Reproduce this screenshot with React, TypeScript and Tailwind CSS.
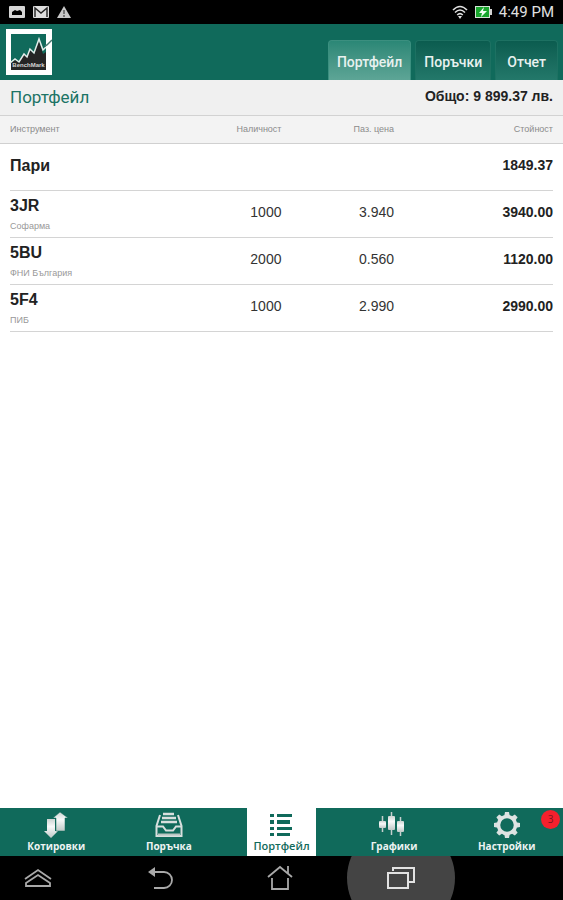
import type { ReactNode } from 'react'
import clsx from 'clsx'

const TOP_TABS = ['Портфейл', 'Поръчки', 'Отчет']

const POSITIONS = [
  { code: '3JR', name: 'Софарма', quantity: '1000', price: '3.940', value: '3940.00' },
  { code: '5BU', name: 'ФНИ България', quantity: '2000', price: '0.560', value: '1120.00' },
  { code: '5F4', name: 'ПИБ', quantity: '1000', price: '2.990', value: '2990.00' },
]

function SteelGradient({ id }: { id: string }) {
  return (
    <linearGradient id={id} x1="0" y1="0" x2="0" y2="1">
      <stop offset="0" stopColor="#cdd5d3" />
      <stop offset="0.4" stopColor="#f7f9f9" />
      <stop offset="1" stopColor="#bfc9c7" />
    </linearGradient>
  )
}

function Logo() {
  return (
    <svg width="46" height="46" viewBox="0 0 46 46" role="img" aria-label="BenchMark">
      <rect width="46" height="46" fill="#fff" />
      <rect x="5" y="5" width="35" height="36" fill="#106a5b" />
      <path d="M5 34l4-3 4 2 5-8 3 3 3-7 4 4 5-13 4 13 3-2v18H5z" fill="#252525" />
      <path d="M4 34l5-4 4 3 5-8 3 3 3-8 4 4 5-14 4 11 3-3" fill="none" stroke="#e4ecea" strokeWidth="1.5" />
      <path d="M39 17l2-1 5-5" fill="none" stroke="#48786f" strokeWidth="1.5" />
      <text x="22.5" y="38" textAnchor="middle" fontSize="6" fill="#d5d5d5" className="font-['Liberation_Sans',sans-serif] font-bold">
        BenchMark
      </text>
    </svg>
  )
}

function PictureIcon() {
  return (
    <svg width="16" height="12" viewBox="0 0 16 12">
      <rect width="16" height="12" rx="1" fill="#d6d6d6" />
      <path d="M3 9V6l3-2 2 1 3-1 2 2v3z" fill="#000" />
    </svg>
  )
}

function MailIcon() {
  return (
    <svg width="16" height="12" viewBox="0 0 16 12">
      <rect width="16" height="12" rx="1" fill="#dedede" />
      <path d="M2 11V2l6 5 6-5v9" fill="none" stroke="#222" strokeWidth="1.4" />
    </svg>
  )
}

function WarningIcon() {
  return (
    <svg width="14" height="12" viewBox="0 0 14 12">
      <path d="M7 0l7 12H0z" fill="#c8c8c8" />
      <path d="M7 4v4M7 9v2" stroke="#555" strokeWidth="1.4" />
    </svg>
  )
}

function WifiIcon() {
  return (
    <svg width="16" height="14" viewBox="0 0 16 14" fill="none" stroke="#e0e0e0" strokeWidth="1.6">
      <path d="M1 5Q8-2 15 5" />
      <path d="M3 7.5Q8 2.5 13 7.5" />
      <path d="M5.2 10Q8 7.2 10.8 10" />
      <path d="M6 11h4l-2 3z" fill="#e0e0e0" stroke="none" />
    </svg>
  )
}

function BatteryIcon() {
  return (
    <svg width="17" height="12" viewBox="0 0 17 12">
      <rect x="15" y="3" width="2" height="6" fill="#d4d4d4" />
      <rect x="0.5" y="0.5" width="14" height="11" fill="#18a52c" stroke="#d4e4d5" />
      <path d="M9 1L4 7h3l-1 4 6-6H8z" fill="#effff0" />
    </svg>
  )
}

function QuotesIcon() {
  return (
    <svg width="24" height="28" viewBox="0 0 24 28">
      <defs><SteelGradient id="quotes" /></defs>
      <path d="M3 8h8v12h3l-7 7-7-7h3z" fill="url(#quotes)" />
      <path d="M16 1l8 6h-3v13h-9V7H9z" fill="url(#quotes)" stroke="#106a5b" strokeWidth="0.5" />
    </svg>
  )
}

function OrderIcon() {
  return (
    <svg width="28" height="26" viewBox="0 0 28 26" fill="none" stroke="#d8dfde" strokeWidth="2">
      <path d="M8 2h11M7 6h14M6 10h16" strokeWidth="2.5" />
      <path d="M5 3L1.5 14v10h25V14L23 3" />
      <path d="M2 14.5h6l3 4h7l3-4h6" />
      <path d="M3 22.5h22" stroke="#b9c6c3" />
    </svg>
  )
}

function ListIcon() {
  return (
    <svg width="22" height="24" viewBox="0 0 22 24" fill="#106a5b">
      <path d="M0 1h4v3H0zM7 1h15v3H7zM0 7h4v4H0zM7 7h13v4H7zM0 14h4v3H0zM7 14h15v3H7zM0 20h4v3H0zM7 20h13v3H7z" />
    </svg>
  )
}

function CandlesIcon() {
  return (
    <svg width="31" height="28" viewBox="0 0 31 28">
      <defs><SteelGradient id="candles" /></defs>
      <path d="M3.5 5v16M12.5 1v23M21.5 6v19" stroke="#c5cfcd" strokeWidth="1.5" />
      <rect x="0" y="10" width="7" height="7" rx="1" fill="url(#candles)" />
      <rect x="9" y="5" width="7" height="14" rx="1" fill="url(#candles)" />
      <rect x="18" y="10" width="7" height="11" rx="1" fill="url(#candles)" />
    </svg>
  )
}

function GearIcon() {
  return (
    <svg width="26" height="26" viewBox="0 0 26 26">
      <g fill="#dbe1e0">
        {[0, 45, 90, 135, 180, 225, 270, 315].map((angle) => (
          <path key={angle} d="M10 5l1-5h4l1 5z" transform={`rotate(${angle} 13 13)`} />
        ))}
      </g>
      <circle cx="13" cy="13" r="8.5" fill="none" stroke="#dfe4e3" strokeWidth="3.5" />
    </svg>
  )
}

function DrawerIcon() {
  return (
    <svg width="28" height="20" viewBox="0 0 28 20" fill="none" stroke="#a9a9a9" strokeWidth="1.8">
      <path d="M1 11L14 2l13 9" />
      <path d="M2 15l12-8 12 8v3H2z" />
    </svg>
  )
}

function BackIcon() {
  return (
    <svg width="26" height="24" viewBox="0 0 26 24" fill="none" stroke="#a9a9a9" strokeWidth="1.8">
      <path d="M6 6h10a8 8 0 0 1 0 16H6" />
      <path d="M0 6l7-5v10z" fill="#a9a9a9" stroke="none" />
    </svg>
  )
}

function HomeIcon() {
  return (
    <svg width="26" height="26" viewBox="0 0 26 26" fill="none" stroke="#a9a9a9" strokeWidth="1.8">
      <path d="M1 12L13 2l12 10M21 8V1" />
      <path d="M5 13v11h16V13" />
    </svg>
  )
}

function RecentIcon() {
  return (
    <svg width="28" height="24" viewBox="0 0 28 24" fill="none" stroke="#e2e2e2" strokeWidth="2">
      <path d="M6 5V2h21v14h-5" />
      <rect x="1" y="7" width="20" height="15" />
    </svg>
  )
}

const BOTTOM_TABS: { label: string; icon: ReactNode; active?: boolean; badge?: string }[] = [
  { label: 'Котировки', icon: <QuotesIcon /> },
  { label: 'Поръчка', icon: <OrderIcon /> },
  { label: 'Портфейл', icon: <ListIcon />, active: true },
  { label: 'Графики', icon: <CandlesIcon /> },
  { label: 'Настройки', icon: <GearIcon />, badge: '3' },
]

export default function App() {
  return (
    <div className="min-h-screen flex flex-col bg-white font-['Liberation_Sans',sans-serif]">
      {/* Status bar */}
      <div className="h-6 shrink-0 bg-black flex items-center justify-between px-[9px]">
        <div className="flex items-center gap-2">
          <PictureIcon />
          <MailIcon />
          <WarningIcon />
        </div>
        <div className="flex items-center gap-[7px] text-[#e0e0e0]">
          <WifiIcon />
          <BatteryIcon />
          <span className="font-[Roboto,sans-serif] text-[15px]">4:49 PM</span>
        </div>
      </div>

      {/* App header */}
      <header className="h-14 shrink-0 bg-[#106a5b] flex items-center justify-between pl-1.5 pr-[5px]">
        <Logo />
        <nav className="self-end flex gap-1 font-[Roboto,sans-serif] text-sm font-medium text-[#e8f1ef]">
          {TOP_TABS.map((tab, i) => (
            <button
              key={tab}
              type="button"
              className={clsx(
                'h-10 rounded-t pt-0.5 border border-b-0',
                i === 0
                  ? 'bg-linear-to-b from-[#2b8776] to-[#5da596] border-[#3b8f7f]'
                  : 'bg-linear-to-b from-[#0b5c4f] to-[#23786a] border-[#1d7162]',
                i === 2 ? 'px-[11px]' : 'px-2',
              )}
            >
              {tab}
            </button>
          ))}
        </nav>
      </header>

      <main className="flex-1">
        <div className="h-9 bg-[#f0f0f0] border-b border-[#d2d2d2] px-2.5 flex items-center justify-between">
          <h1 className="font-[Roboto,sans-serif] text-[17px] text-[#1c7465]">Портфейл</h1>
          <p className="text-sm font-bold text-[#222] pb-1">Общо: 9 899.37 лв.</p>
        </div>

        <table className="w-full table-fixed">
          <thead>
            <tr className="h-[27px] bg-[#f3f3f3] border-b border-[#d0d0d0] text-[9px] text-[#8b8b8b]">
              <th className="w-3/10 pl-2.5 text-left font-normal">Инструмент</th>
              <th className="w-1/5 text-right font-normal">Наличност</th>
              <th className="w-1/5 text-right font-normal">Паз. цена</th>
              <th className="w-3/10 pr-2.5 text-right font-normal">Стойност</th>
            </tr>
          </thead>
          <tbody className="text-sm text-[#333]">
            <tr>
              <td colSpan={3} className="pl-2.5">
                <div className="h-[47px] pb-0.5 border-b border-[#d4d4d4] flex items-center text-base font-bold text-[#222]">Пари</div>
              </td>
              <td className="pr-2.5">
                <div className="h-[47px] pb-1 border-b border-[#d4d4d4] flex items-center justify-end font-bold text-[#222]">1849.37</div>
              </td>
            </tr>
            {POSITIONS.map((p) => (
              <tr key={p.code}>
                <td className="pl-2.5">
                  <div className="h-[47px] border-b border-[#d4d4d4] flex flex-col justify-center gap-1">
                    <span className="text-base leading-5 font-bold text-[#222]">{p.code}</span>
                    <span className="text-[9px] leading-3 text-[#999]">{p.name}</span>
                  </div>
                </td>
                <td>
                  <div className="h-[47px] pb-1 border-b border-[#d4d4d4] flex items-center justify-end">{p.quantity}</div>
                </td>
                <td>
                  <div className="h-[47px] pb-1 border-b border-[#d4d4d4] flex items-center justify-end">{p.price}</div>
                </td>
                <td className="pr-2.5">
                  <div className="h-[47px] pb-1 border-b border-[#d4d4d4] flex items-center justify-end font-bold text-[#222]">{p.value}</div>
                </td>
              </tr>
            ))}
          </tbody>
        </table>
      </main>

      {/* Bottom tabs */}
      <nav className="h-12 shrink-0 bg-[#106a5b] grid grid-cols-5 font-['Open_Sans',sans-serif]">
        {BOTTOM_TABS.map((tab) => (
          <div key={tab.label} className="relative flex justify-center">
            <button
              type="button"
              className={clsx(
                'h-12 flex flex-col items-center leading-4',
                tab.active ? 'px-1.5 bg-white text-[#106a5b] text-[11px] font-semibold' : 'px-1 text-[#edf3f2] text-[10px] font-bold',
              )}
            >
              <span className="h-[30px] pt-1 flex items-center">{tab.icon}</span>
              {tab.label}
            </button>
            {tab.badge && (
              <span className="absolute top-0.5 right-[3px] size-[19px] rounded-full bg-[#f5202d] text-[#7c1620] text-[10px] flex items-center justify-center">
                {tab.badge}
              </span>
            )}
          </div>
        ))}
      </nav>

      {/* System navigation */}
      <div className="h-11 shrink-0 bg-black grid grid-rows-1 grid-cols-[76fr_170fr_68fr_174fr_75fr] items-center justify-items-center overflow-hidden">
        <button type="button" aria-label="Приложения"><DrawerIcon /></button>
        <button type="button" aria-label="Назад"><BackIcon /></button>
        <button type="button" aria-label="Начало"><HomeIcon /></button>
        <button type="button" aria-label="Последни" className="size-[108px] rounded-full bg-[#444] flex items-center justify-center">
          <RecentIcon />
        </button>
      </div>
    </div>
  )
}
